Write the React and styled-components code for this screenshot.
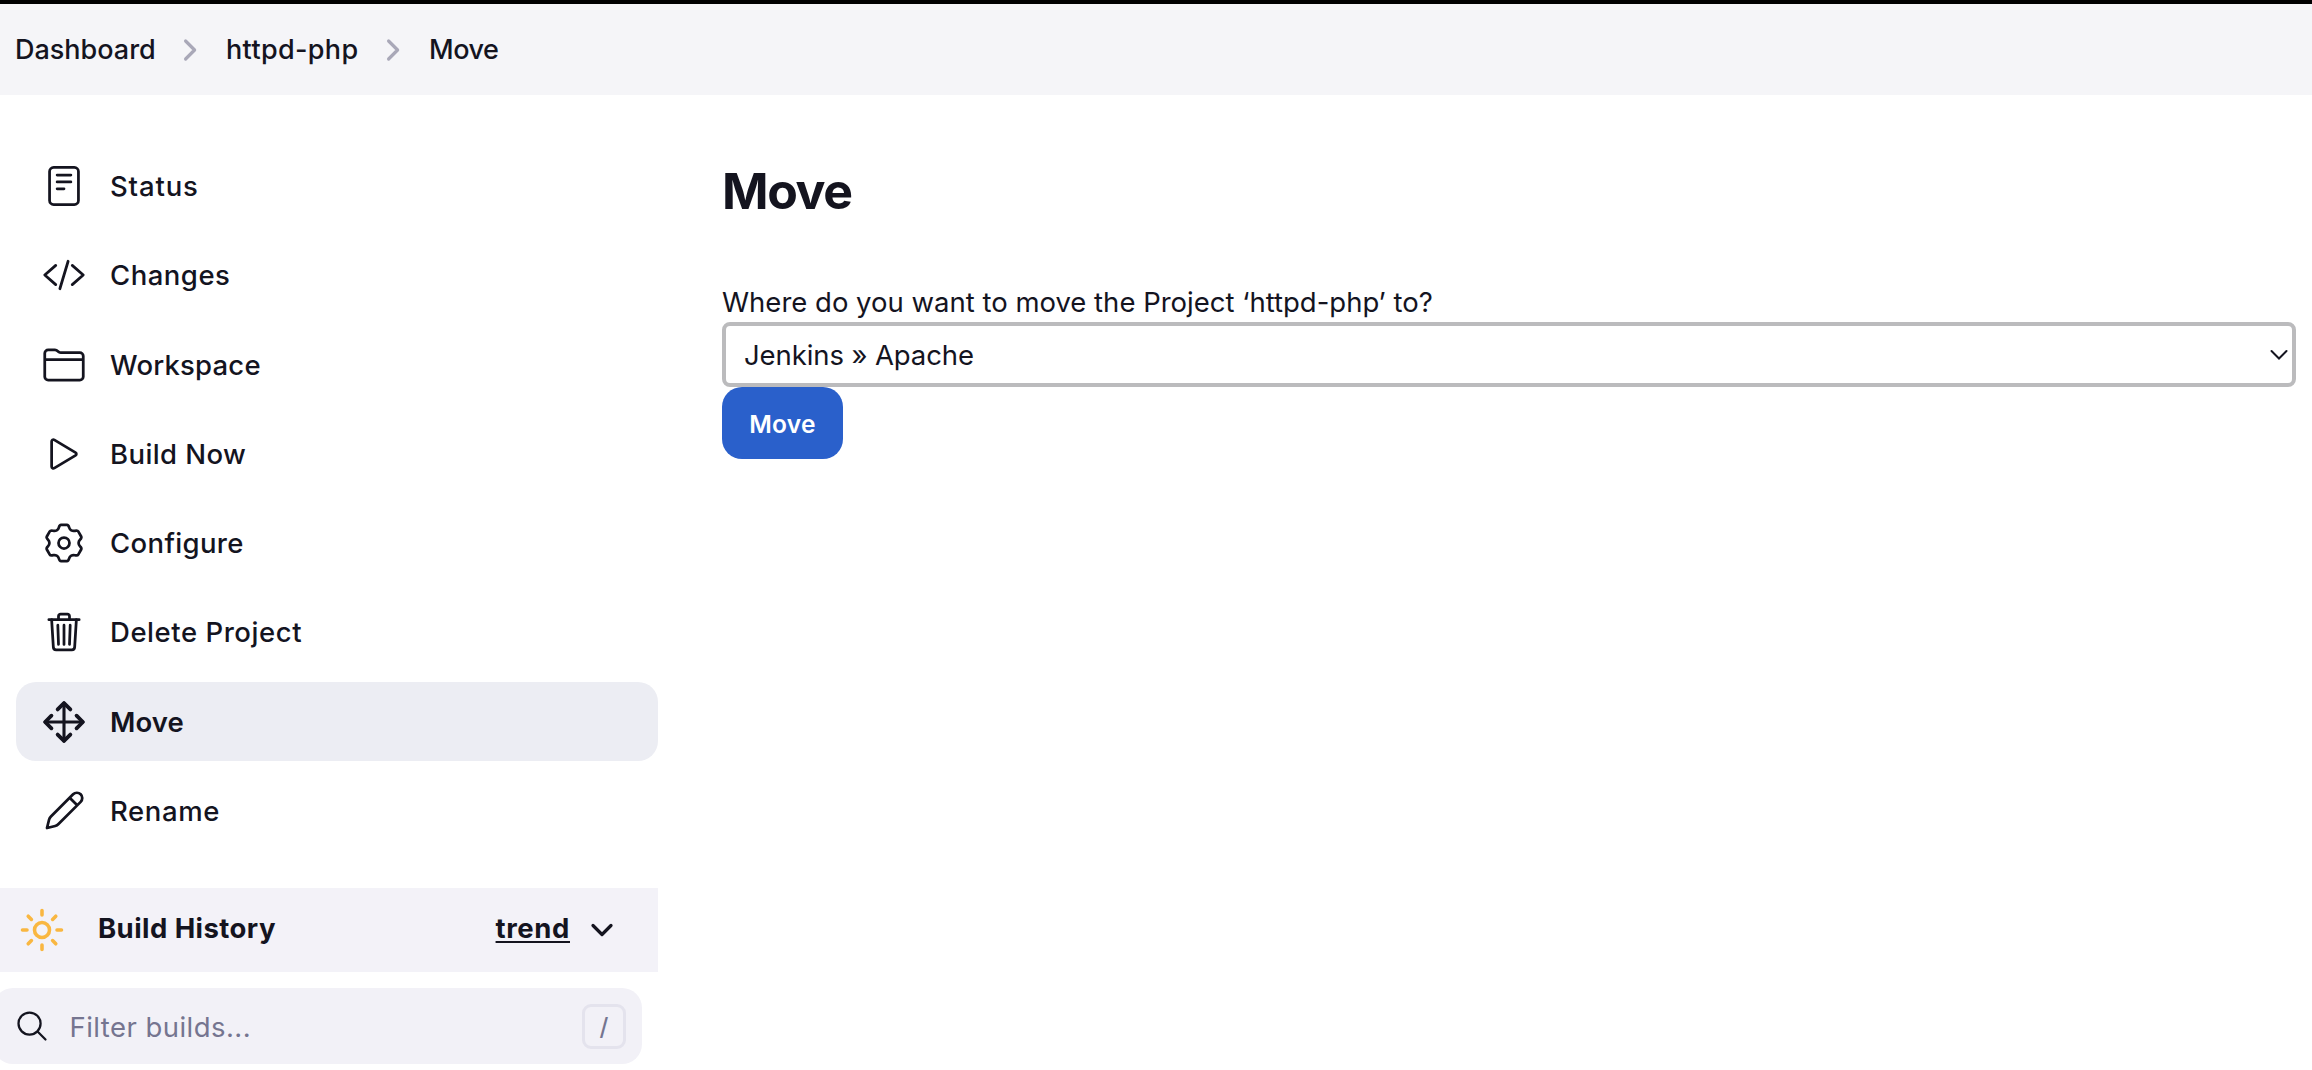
import React from "react";
import styled, { createGlobalStyle } from "styled-components";
import {
  IoCodeSlashOutline,
  IoFolderOutline,
  IoPlayOutline,
  IoSearchOutline,
  IoTrashOutline,
} from "react-icons/io5";

const GlobalStyle = createGlobalStyle`
  *, *::before, *::after { box-sizing: border-box; }
  body {
    margin: 0;
    background: #fff;
    color: #14141f;
    font-family: Inter, "Liberation Sans", sans-serif;
    font-size: 27.5px;
    overflow: hidden;
  }
`;

const Page = styled.div`
  height: 1070px;
  overflow: hidden;
  border-top: 4px solid #000;
`;

const Breadcrumbs = styled.nav`
  display: flex;
  align-items: center;
  height: 91px;
  padding: 0 15px;
  background: #f5f5f8;
`;

const Crumb = styled.a`
  width: ${(p) => p.$width}px;
  white-space: nowrap;
  font-weight: 500;
  font-size: 27px;
  line-height: 40px;
  letter-spacing: ${(p) => p.$spacing || 0}px;
`;

const CrumbArrow = styled.svg`
  flex: none;
  width: 14px;
  height: 24px;
  margin: 1px 29px 0 0;
  color: #a9a8b8;
`;

const Body = styled.div`
  display: flex;
`;

const Sidebar = styled.aside`
  flex: none;
  width: 658px;
  padding-top: 51.5px;
`;

const Tasks = styled.div`
  display: flex;
  flex-direction: column;
  gap: 10.25px;
  padding-left: 16px;
`;

const Task = styled.a`
  display: flex;
  align-items: center;
  gap: 24px;
  height: 79px;
  padding-left: 26px;
  border-radius: 20px;
  background: ${(p) => (p.$active ? "#ecedf3" : "transparent")};
  font-weight: ${(p) => (p.$active ? 600 : 500)};
  letter-spacing: ${(p) => p.$spacing || 0}px;
  white-space: nowrap;

  svg {
    flex: none;
    width: 44px;
    height: 44px;
  }
`;

const HistoryHeader = styled.div`
  display: flex;
  align-items: center;
  height: 84px;
  margin-top: 37.75px;
  padding: 0 40px 0 18px;
  background: #f3f2f8;
  font-weight: 700;
`;

const HistoryTitle = styled.span`
  flex: 1;
  margin-left: 32px;
  padding-bottom: 4px;
  letter-spacing: 0.43px;
`;

const TrendLink = styled.a`
  margin-right: 16px;
  padding-bottom: 4px;
  letter-spacing: 0.6px;
  text-decoration: underline;
  text-decoration-thickness: 2px;
  text-underline-offset: 3px;
`;

const Filter = styled.label`
  display: flex;
  align-items: center;
  height: 76px;
  margin: 16px 16px 0 -7px;
  padding: 0 16px 0 21px;
  border-radius: 20px;
  background: #f2f1f7;
`;

const SearchIcon = styled(IoSearchOutline)`
  flex: none;
  width: 36px;
  height: 36px;
`;

const FilterHint = styled.span`
  flex: 1;
  margin-left: 19.5px;
  padding-top: 1px;
  color: #757590;
  letter-spacing: 0.45px;
`;

const Key = styled.kbd`
  display: grid;
  place-items: center;
  width: 44px;
  height: 45px;
  border: 3px solid #e4e3ed;
  border-radius: 9px;
  color: #757590;
  font: 500 24px Inter, sans-serif;
`;

const Main = styled.main`
  flex: 1;
  padding: 64px 16px 0 64px;
`;

const Title = styled.h1`
  margin: 0;
  font-size: 50px;
  font-weight: 700;
  line-height: 64px;
  letter-spacing: -1.4px;
`;

const Question = styled.p`
  margin: 59px 0 0;
  line-height: 40px;
`;

const Select = styled.div`
  display: flex;
  align-items: center;
  justify-content: space-between;
  height: 65px;
  padding: 0 3px 0 18px;
  border: 4px solid #bbbbbd;
  border-radius: 8px;
  letter-spacing: -0.1px;
`;

const SelectArrow = styled.svg`
  width: 20px;
  height: 12px;
`;

const Button = styled.button`
  display: block;
  width: 121px;
  height: 72px;
  border: 0;
  border-radius: 20px;
  padding: 2px 0 0;
  background: #2a60cb;
  color: #fff;
  font: 600 24.5px Inter, sans-serif;
  letter-spacing: 0.3px;
`;

const Glyph = styled.svg.attrs({
  viewBox: "0 0 512 512",
  fill: "none",
  stroke: "currentColor",
  strokeLinecap: "round",
  strokeLinejoin: "round",
})`
  flex: none;
  width: ${(p) => p.$size || 44}px;
  height: ${(p) => p.$size || 44}px;
  stroke-width: ${(p) => p.$stroke || 32};
  color: ${(p) => p.$color || "inherit"};
`;

const StatusIcon = () => (
  <Glyph>
    <rect x="88" y="40" width="336" height="432" rx="48" />
    <path d="M176 128h160M176 208h160M176 288h80" />
  </Glyph>
);

// One tooth of the gear, relative to its centre; six rotations close the outline.
const tooth = [
  ["L", [-60, -180]],
  ["Q", [-52, -211], [-34, -211]],
  ["L", [34, -211]],
  ["Q", [52, -211], [60, -180]],
  ["Q", [66, -158], [85, -147]],
];

const gearOutline = (() => {
  const at = ([x, y], turn) => {
    const a = (turn * Math.PI) / 3;
    const px = 256 + x * Math.cos(a) - y * Math.sin(a);
    const py = 256 + x * Math.sin(a) + y * Math.cos(a);
    return `${px.toFixed(1)} ${py.toFixed(1)}`;
  };
  const parts = ["M" + at([-85, -147], 0)];
  for (let turn = 0; turn < 6; turn++) {
    tooth.forEach(([cmd, ...pts], i) => {
      if (i === 0) parts.push(`Q${at([-66, -158], turn)} ${at(pts[0], turn)}`);
      else parts.push(cmd + pts.map((p) => at(p, turn)).join(" "));
    });
  }
  return parts.join("") + "Z";
})();

const GearIcon = () => (
  <Glyph>
    <path d={gearOutline} />
    <circle cx="256" cy="256" r="64" />
  </Glyph>
);

const MoveIcon = () => (
  <Glyph $stroke={44}>
    <path d="M182 110l74-74 74 74M182 402l74 74 74-74M402 182l74 74-74 74M110 182l-74 74 74 74" />
    <path d="M256 36v440M36 256h440" strokeWidth="36" />
  </Glyph>
);

const PencilIcon = () => (
  <Glyph>
    <path d="M58 454l24-96q6-22 22-38L362 62a56 56 0 0 1 88 88L192 408q-16 16-38 22zM322 102l88 88" />
  </Glyph>
);

const SunIcon = () => (
  <Glyph $size={48} $stroke={38} $color="#f9b741">
    <circle cx="256" cy="256" r="80" />
    <path d="M256 48v48M256 416v48M403 109l-34 34M143 369l-34 34M464 256h-48M96 256H48M403 403l-34-34M143 143l-34-34" />
  </Glyph>
);

const Arrow = () => (
  <CrumbArrow viewBox="0 0 14 24" fill="none" stroke="currentColor" strokeWidth="3.2" strokeLinecap="round" strokeLinejoin="round">
    <path d="M2.6 3l9 9-9 9" />
  </CrumbArrow>
);

const tasks = [
  { label: "Status", Icon: StatusIcon, spacing: 0.85 },
  { label: "Changes", Icon: IoCodeSlashOutline, spacing: 0.5 },
  { label: "Workspace", Icon: IoFolderOutline, spacing: 0.2 },
  { label: "Build Now", Icon: IoPlayOutline, spacing: 0.4 },
  { label: "Configure", Icon: GearIcon, spacing: 0.36 },
  { label: "Delete Project", Icon: IoTrashOutline, spacing: 0.55 },
  { label: "Move", Icon: MoveIcon, spacing: 0.1, active: true },
  { label: "Rename", Icon: PencilIcon, spacing: 0.6 },
];

export default function App() {
  return (
    <>
      <GlobalStyle />
      <Page>
        <Breadcrumbs>
          <Crumb $width={168}>Dashboard</Crumb>
          <Arrow />
          <Crumb $width={160} $spacing={0.35}>httpd-php</Crumb>
          <Arrow />
          <Crumb $spacing={-0.5}>Move</Crumb>
        </Breadcrumbs>
        <Body>
          <Sidebar>
            <Tasks>
              {tasks.map(({ label, Icon, spacing, active }) => (
                <Task key={label} $active={active} $spacing={spacing}>
                  <Icon />
                  {label}
                </Task>
              ))}
            </Tasks>
            <HistoryHeader>
              <SunIcon />
              <HistoryTitle>Build History</HistoryTitle>
              <TrendLink>trend</TrendLink>
              <Glyph $size={32} $stroke={52}>
                <path d="M112 184l144 144 144-144" />
              </Glyph>
            </HistoryHeader>
            <Filter>
              <SearchIcon />
              <FilterHint>Filter builds...</FilterHint>
              <Key>/</Key>
            </Filter>
          </Sidebar>
          <Main>
            <Title>Move</Title>
            <Question>Where do you want to move the Project ‘httpd-php’ to?</Question>
            <Select>
              Jenkins » Apache
              <SelectArrow viewBox="0 0 20 12" fill="none" stroke="currentColor" strokeWidth="2" strokeLinecap="round">
                <path d="M2.5 2l7.500 7.500L17.500 2" />
              </SelectArrow>
            </Select>
            <Button>Move</Button>
          </Main>
        </Body>
      </Page>
    </>
  );
}
